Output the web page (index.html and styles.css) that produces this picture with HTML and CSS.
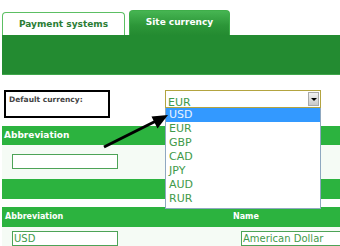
FILE: index.html
```html
<!DOCTYPE html>
<html lang="en">
<head>
    <meta charset="UTF-8">
    <title>Site currency</title>
    <link rel="stylesheet" href="styles.css">
</head>
<body>

    <!-- Tabs -->
    <div class="tabs">
        <div class="tab">Payment systems</div>
        <div class="tab tab-active">Site currency</div>
    </div>
    <div class="band band-top"></div>

    <!-- Default currency -->
    <div class="settings">
        <div class="label-box">Default currency:</div>
        <div class="select">
            <span class="select-value">EUR</span>
            <span class="select-button"><span class="select-arrow"></span></span>
            <ul class="select-list">
                <li class="selected">USD</li>
                <li>EUR</li>
                <li>GBP</li>
                <li>CAD</li>
                <li>JPY</li>
                <li>AUD</li>
                <li>RUR</li>
            </ul>
        </div>
    </div>

    <!-- New currency -->
    <div class="section-head">Abbreviation</div>
    <div class="section-body">
        <input class="field" type="text" value="">
    </div>
    <div class="band band-mid"></div>

    <!-- Currency table -->
    <div class="table">
        <div class="table-head">Abbreviation</div>
        <div class="table-head">Name</div>
        <div class="table-cell"><input class="field" type="text" value="USD"></div>
        <div class="table-cell"><input class="field field-wide" type="text" value="American Dollar"></div>
    </div>

    <!-- Pfeil auf die Liste -->
    <svg class="pointer" width="340" height="246" viewBox="0 0 340 246">
        <line x1="104" y1="147" x2="156" y2="121" stroke="#000" stroke-width="3"/>
        <polygon points="168,115 151.5,116.5 157.5,128.5" fill="#000"/>
    </svg>

</body>
</html>
```

FILE: styles.css
```css
body {
    margin: 0;
    padding: 0;
    width: 340px;
    height: 246px;
    overflow: hidden;
    background-color: white;
    font-family: "DejaVu Sans", Verdana, sans-serif;
    position: relative;
}

/* Tabs */
.tabs {
    display: flex;
    align-items: flex-end;
    gap: 4px;
    padding: 10px 0 0 2px;
}

.tab {
    width: 121px;
    height: 22px;
    line-height: 22px;
    text-align: center;
    font-size: 9px;
    font-weight: bold;
    color: #2b7d34;
    background-color: white;
    border: 1px solid #5cbf63;
    border-bottom: none;
    border-radius: 4px 4px 0 0;
}

.tab-active {
    width: 99px;
    height: 24px;
    line-height: 22px;
    color: white;
    border-color: #3fae4a;
    background: linear-gradient(#46b552, #2c9638 60%, #248b31);
}

.band {
    margin-left: 2px;
}

.band-top {
    height: 39px;
    background-color: #238b31;
    border-bottom: 1px solid #3fa64b;
}

/* Default currency */
.settings {
    display: flex;
    align-items: flex-start;
    padding: 15px 0 0 4px;
    height: 36px;
}

.label-box {
    width: 106px;
    height: 28px;
    border: 2px solid black;
    font-size: 7.5px;
    font-weight: bold;
    color: #444;
    padding: 3px 0 0 3px;
    box-sizing: border-box;
}

.select {
    position: relative;
    margin-left: 55px;
    width: 156px;
    height: 18px;
    border: 1px solid #b3a440;
    box-sizing: border-box;
    background-color: white;
}

.select-value {
    font-size: 11px;
    color: #3f9a4a;
    line-height: 16px;
    padding-left: 2px;
}

.select-button {
    position: absolute;
    right: 1px;
    top: 1px;
    width: 11px;
    height: 14px;
    background: linear-gradient(#f2f2f2, #c9c9c9);
    border: 1px solid #a9a9a9;
    box-sizing: border-box;
    display: flex;
    align-items: center;
    justify-content: center;
}

.select-arrow {
    width: 0;
    height: 0;
    border-left: 3px solid transparent;
    border-right: 3px solid transparent;
    border-top: 3px solid black;
}

/* Offene Liste */
.select-list {
    position: absolute;
    top: 17px;
    left: -1px;
    width: 156px;
    margin: 0;
    padding: 0 0 2px 0;
    list-style: none;
    background-color: white;
    border: 1px solid #8fa8c0;
    border-top: none;
    box-sizing: border-box;
    z-index: 2;
}

.select-list li {
    height: 14px;
    line-height: 14px;
    font-size: 11px;
    color: #3f9a4a;
    padding-left: 3px;
}

.select-list li.selected {
    background-color: #3399ff;
    color: #e8f3ff;
}

/* Abschnitt */
.section-head {
    margin-left: 2px;
    height: 19px;
    line-height: 19px;
    background-color: #2cb33f;
    color: white;
    font-size: 9px;
    font-weight: bold;
    padding-left: 2px;
}

.section-body {
    margin-left: 2px;
    height: 34px;
    background-color: #f5fbf5;
    padding: 9px 0 0 10px;
    box-sizing: border-box;
}

.field {
    display: block;
    width: 106px;
    height: 15px;
    margin: 0;
    padding: 0 1px;
    border: 1px solid #4da357;
    box-sizing: border-box;
    font-family: "DejaVu Sans", Verdana, sans-serif;
    font-size: 10px;
    color: #3f9a4a;
    background-color: white;
    outline: none;
}

.field-wide {
    width: 99px;
    border-right: none;
}

.band-mid {
    height: 20px;
    background-color: #2cb33f;
    margin-bottom: 8px;
}

/* Tabelle */
.table {
    margin-left: 2px;
    display: grid;
    grid-template-columns: 228px 110px;
}

.table-head {
    height: 20px;
    line-height: 20px;
    background-color: #2cb33f;
    color: white;
    font-size: 8px;
    font-weight: bold;
    padding-left: 3px;
}

.table-cell {
    background-color: #f5fbf5;
    padding: 4px 0 4px 10px;
}

.table-cell:last-child {
    padding-left: 11px;
}

/* Pfeil */
.pointer {
    position: absolute;
    top: 0;
    left: 0;
    z-index: 3;
}
```
